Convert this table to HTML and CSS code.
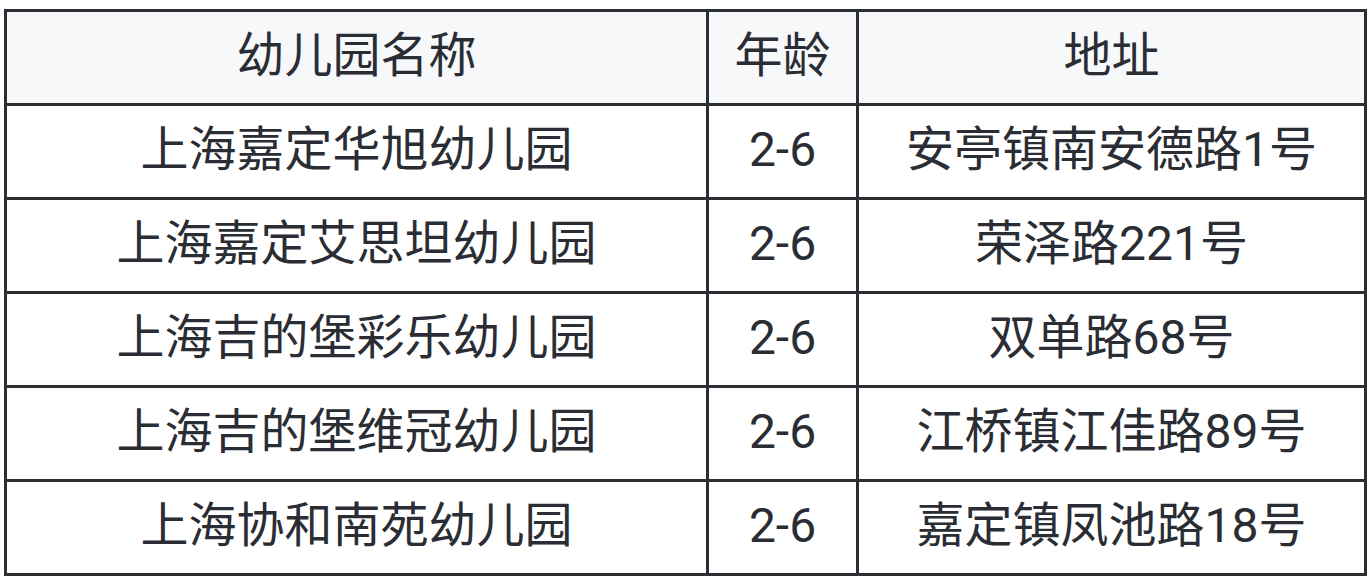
FILE: index.html
```html
<!DOCTYPE html>
<html lang="zh">
<head>
<meta charset="utf-8">
<link rel="stylesheet" href="styles.css">
</head>
<body>
<table class="kg-table">
  <colgroup>
    <col class="c-name">
    <col class="c-age">
    <col class="c-addr">
  </colgroup>
  <thead>
    <tr><th>幼儿园名称</th><th>年龄</th><th>地址</th></tr>
  </thead>
  <tbody>
    <tr><td>上海嘉定华旭幼儿园</td><td>2-6</td><td>安亭镇南安德路1号</td></tr>
    <tr><td>上海嘉定艾思坦幼儿园</td><td>2-6</td><td>荣泽路221号</td></tr>
    <tr><td>上海吉的堡彩乐幼儿园</td><td>2-6</td><td>双单路68号</td></tr>
    <tr><td>上海吉的堡维冠幼儿园</td><td>2-6</td><td>江桥镇江佳路89号</td></tr>
    <tr><td>上海协和南苑幼儿园</td><td>2-6</td><td>嘉定镇凤池路18号</td></tr>
  </tbody>
</table>
</body>
</html>
```
FILE: styles.css
```css
html, body {
  margin: 0;
  padding: 0;
  background: #ffffff;
}
body {
  padding: 9px 0 0 4px;
  font-family: Roboto, "Noto Sans CJK SC", "Noto Sans", sans-serif;
  color: #2a2d33;
}
.kg-table {
  border-collapse: collapse;
  width: 1360px;
  table-layout: fixed;
}
.c-name { width: 702px; }
.c-age { width: 150px; }
.c-addr { width: 508px; }
.kg-table th,
.kg-table td {
  border: 3px solid #2b2e33;
  height: 88px;
  padding: 0 0 3px;
  text-align: center;
  vertical-align: middle;
  font-size: 48px;
  font-weight: 400;
  line-height: 1;
}
.kg-table th {
  background: #f7f8fa;
}
```
